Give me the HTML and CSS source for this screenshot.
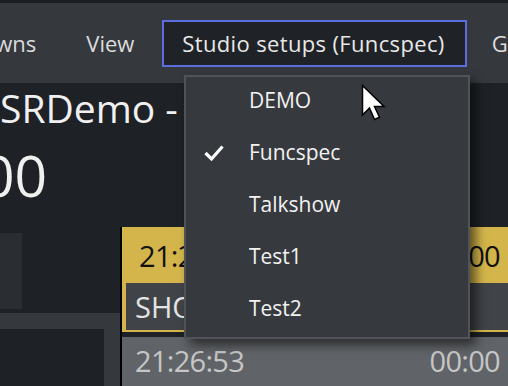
FILE: index.html
```html
<!DOCTYPE html>
<html lang="en">
<head>
    <meta charset="UTF-8">
    <meta name="viewport" content="width=device-width, initial-scale=1.0">
    <title>Studio setups</title>
    <link rel="stylesheet" href="styles.css">
</head>
<body>
    <div class="topline"></div>

    <div class="menubar">
        <span class="menu-item first">Rundowns</span>
        <span class="menu-item">View</span>
        <span class="menu-item open">Studio setups (Funcspec)</span>
        <span class="menu-item">Go to</span>
    </div>

    <div class="header">
        <div class="title">SRDemo - Show</div>
        <div class="clock">00</div>
    </div>

    <div class="workspace">
        <div class="sidebar">
            <div class="sb-top"><div class="sb-box"></div></div>
            <div class="sb-bottom"><div class="sb-inner"></div></div>
        </div>
        <div class="rundown">
            <div class="cue live">
                <div class="cue-times">
                    <span>21:26:53</span>
                    <span>00:00</span>
                </div>
                <div class="cue-title">SHOW OPEN</div>
            </div>
            <div class="cue-row">
                <span>21:26:53</span>
                <span>00:00</span>
            </div>
        </div>
    </div>

    <!-- dropdown of the open menu -->
    <div class="dropdown">
        <div class="dd-item">DEMO</div>
        <div class="dd-item checked">
            <svg class="check" width="20" height="18" viewBox="0 0 20 18">
                <polyline points="1.5,9 7.5,15 18.5,2.5" fill="none" stroke="#ffffff" stroke-width="3.2"/>
            </svg>
            Funcspec
        </div>
        <div class="dd-item">Talkshow</div>
        <div class="dd-item">Test1</div>
        <div class="dd-item">Test2</div>
    </div>

    <svg class="cursor" width="26" height="40" viewBox="0 0 26 40">
        <path d="M1.5 1.5 V31 L8.5 24 L13.5 35.5 L18.5 33.3 L13.5 22.5 H23 Z" fill="#ffffff" stroke="#000000" stroke-width="1.5" stroke-linejoin="miter"/>
    </svg>
</body>
</html>
```

FILE: styles.css
```css
body {
    margin: 0;
    width: 508px;
    height: 386px;
    overflow: hidden;
    background: #1e2125;
    font-family: "Open Sans", "Noto Sans", sans-serif;
    color: #e6e6e6;
    position: relative;
}
.topline {
    height: 3px;
    background: #1b1d21;
}
.menubar {
    height: 80px;
    background: #35383d;
    display: flex;
    align-items: center;
    white-space: nowrap;
    overflow: hidden;
    font-size: 22px;
    color: #dcdcdc;
}
.menu-item {
    padding: 0 25px;
}
.menu-item.first {
    margin-left: -97px;
}
.menu-item.open {
    margin-left: 3px;
    height: 43px;
    line-height: 43px;
    padding: 0 20px 0 18px;
    border: 2px solid #5a6ee0;
    background: #1f2226;
    color: #e8e8e8;
    letter-spacing: 0.35px;
}
.header {
    white-space: nowrap;
    overflow: hidden;
    color: #f0f0f0;
}
.title {
    font-size: 39px;
    line-height: 48px;
    margin-top: 1px;
}
.clock {
    font-size: 57px;
    line-height: 70px;
    margin: 8px 0 0 -18px;
}
.workspace {
    display: flex;
    margin-top: 17px;
}
.sidebar {
    width: 120px;
}
.sb-top {
    height: 86px;
    padding-top: 6px;
    box-sizing: border-box;
}
.sb-box {
    width: 22px;
    height: 76px;
    background: #2a2d31;
}
.sb-bottom {
    background: #35383c;
    padding: 16px 16px 0 0;
    height: 57px;
}
.sb-inner {
    background: #1e2125;
    height: 100%;
}
.rundown {
    flex: 1;
    border-left: 2px solid #000000;
    overflow: hidden;
    white-space: nowrap;
}
.cue.live {
    background: #d3b54b;
    padding: 0 0 2px 4px;
}
.cue-times,
.cue-row {
    display: flex;
    justify-content: space-between;
    font-size: 29px;
    letter-spacing: -0.7px;
    padding: 0 8px 0 13px;
}
.cue-times {
    height: 56px;
    line-height: 58px;
    color: #111111;
}
.cue-title {
    background: #404347;
    height: 47px;
    line-height: 47px;
    font-size: 29px;
    padding-left: 9px;
    color: #e4e4e4;
}
.cue-row {
    margin-top: 5px;
    background: #606367;
    color: #c6c6c6;
    height: 50px;
    line-height: 48px;
}
.dropdown {
    position: absolute;
    left: 184px;
    top: 75px;
    width: 282px;
    height: 259px;
    background: #36393e;
    border: 2px solid #505357;
    box-shadow: 6px 6px 10px rgba(0, 0, 0, 0.55);
    padding-top: 1px;
}
.dd-item {
    position: relative;
    height: 52px;
    line-height: 44px;
    padding-left: 63px;
    font-size: 21px;
    font-weight: 500;
    color: #f2f2f2;
}
.check {
    position: absolute;
    left: 18px;
    top: 14px;
}
.cursor {
    position: absolute;
    left: 361px;
    top: 84px;
}
```
